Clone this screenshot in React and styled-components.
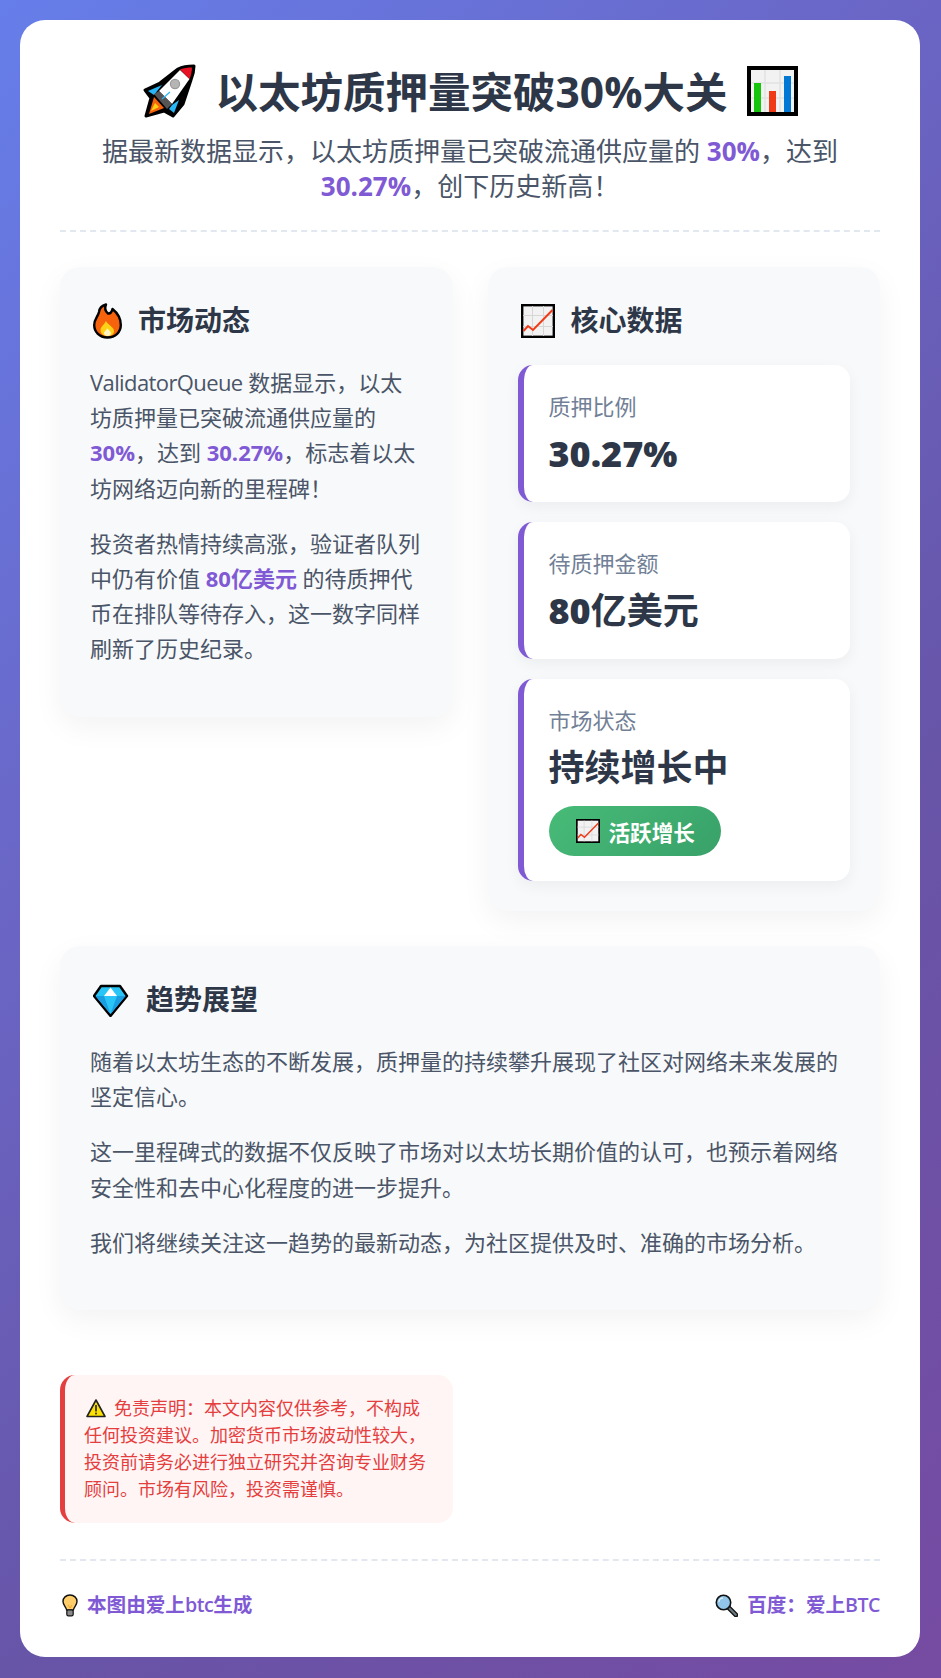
import React from "react";
import styled, { createGlobalStyle } from "styled-components";

const GlobalStyle = createGlobalStyle`
  * { box-sizing: border-box; }
  body {
    margin: 0;
    font-family: "Open Sans", "Noto Sans CJK SC", sans-serif;
  }
`;

const RocketIcon = () => (
  <Glyph $w={54} $h={54} viewBox="0 0 54 54">
    <path d="M52 2 C46 2 40 3 36 5 L18 19 L3 26 L9 34 L4 52 L22 47 L31 52 L41 40 L49 16 C51 11 52 6 52 2 Z" fill="#000" stroke="#000" strokeWidth="3" strokeLinejoin="round" />
    <polygon points="12,33 22,44 7,50" fill="#f7630c" />
    <polygon points="13,39 17,43 9,47" fill="#fcd116" />
    <polygon points="6,27 20,21 12,31" fill="#29b6f6" />
    <polygon points="30,41 37,36 32,49 27,45" fill="#29b6f6" />
    <polygon points="17,27 38,6 47.5,15 30,40" fill="#fff" />
    <path d="M38 5.5 C42 4 46 3.5 50 3.5 C50 7 49 11.5 47.5 15 Z" fill="#e81224" />
    <polygon points="12,30 17,27 30,40 25,45" fill="#555" />
    <path d="M20 35 L28 28" stroke="#29b6f6" strokeWidth="1.2" />
    <circle cx="33" cy="20" r="4.6" fill="#b5b5b5" stroke="#9a9a9a" strokeWidth="1.2" />
  </Glyph>
);

const BarsIcon = () => (
  <Glyph $w={51} $h={50} viewBox="0 0 51 50">
    <rect x="2" y="2" width="47" height="46" fill="#f2f2f2" stroke="#000" strokeWidth="4" />
    <path d="M18 4 V46 M33 4 V46 M4 17 H47 M4 32 H47" stroke="#e2e2e2" strokeWidth="1.5" />
    <rect x="7" y="17" width="7" height="29" fill="#16c60c" />
    <rect x="22" y="25" width="7" height="21" fill="#f03a17" />
    <rect x="37" y="10" width="7" height="36" fill="#0078d4" />
  </Glyph>
);

const TrendIcon = ({ size = 34 }) => (
  <Glyph $w={size} $h={size} viewBox="0 0 34 34">
    <rect x="1.2" y="1.2" width="31.6" height="31.6" fill="#f2f2f2" stroke="#000" strokeWidth="2.4" />
    <path d="M11.5 2 V32 M22.5 2 V32 M2 11.5 H32 M2 22.5 H32" stroke="#d6d6d6" strokeWidth="1" />
    <path d="M2.5 27 L7 22 L12 26 L31.5 6" fill="none" stroke="#f03a17" strokeWidth="2" />
  </Glyph>
);

const FireIcon = () => (
  <Glyph $w={29} $h={36} viewBox="0 0 29 36">
    <path d="M14.5 34.5 C6 34.5 1.2 28.5 1.2 22 C1.2 16 5 13.5 6 9 C6.5 5 9 2.5 13 1.5 C11.5 5 12.5 8.5 15 10.5 C17.5 11 19 8.5 19.5 6 C24.5 10 27.8 15 27.8 22 C27.8 29 22.5 34.5 14.5 34.5 Z" fill="#f7630c" stroke="#000" strokeWidth="2.4" strokeLinejoin="round" />
    <path d="M14.5 33 C10 33 7.5 30 7.5 27 C7.5 24 10.5 22.5 13 18 C15 22 21 24 21 28 C21 31 18.5 33 14.5 33 Z" fill="#fcd116" />
    <path d="M14.5 33 C12 33 11 31.5 11 30 C11 28.5 13 27.5 14.5 25.5 C16 27.5 18 28.5 18 30 C18 31.5 17 33 14.5 33 Z" fill="#fff3c4" />
  </Glyph>
);

const DiamondIcon = () => (
  <Glyph $w={37} $h={33} viewBox="0 0 37 33">
    <polygon points="8,2 27,2 34,12 17.5,32 1,12" fill="#29c5f6" stroke="#000" strokeWidth="2.4" strokeLinejoin="round" />
    <polygon points="2.5,12 11,12 17.5,30" fill="#1b9de2" />
    <polygon points="32.5,12 24,12 17.5,30" fill="#1b9de2" />
    <polygon points="17.5,3.5 24,12 11,12" fill="#fff" />
  </Glyph>
);

const WarningIcon = () => (
  <InlineGlyph $w={20} $h={20} viewBox="0 0 20 20">
    <polygon points="10,2 19,18.5 1,18.5" fill="#fce100" stroke="#222" strokeWidth="1.6" strokeLinejoin="round" />
    <rect x="9.2" y="7" width="1.6" height="6.5" fill="#222" />
    <rect x="9.2" y="14.6" width="1.6" height="1.8" fill="#222" />
  </InlineGlyph>
);

const BulbIcon = () => (
  <Glyph $w={16} $h={23} viewBox="0 0 16 23">
    <path d="M8 1 C4 1 1 3.8 1 7.5 C1 11 4 12.5 4.6 16 H11.4 C12 12.5 15 11 15 7.5 C15 3.8 12 1 8 1 Z" fill="#ffce6b" stroke="#111" strokeWidth="1.4" />
    <path d="M6 11 L8 14 L10 11" fill="none" stroke="#f5a623" strokeWidth="1" />
    <rect x="4.8" y="16" width="6.4" height="5.8" rx="1.6" fill="#8a8a8a" stroke="#111" strokeWidth="1.2" />
  </Glyph>
);

const SearchIcon = () => (
  <Glyph $w={23} $h={23} viewBox="0 0 23 23">
    <path d="M13.5 13.5 L21 21" stroke="#111" strokeWidth="4.6" strokeLinecap="round" />
    <path d="M14 14 L20.8 20.8" stroke="#6b7a80" strokeWidth="2.2" strokeLinecap="round" />
    <circle cx="8.5" cy="8.5" r="7.2" fill="#91c6ea" stroke="#111" strokeWidth="1.6" />
    <path d="M4 8 C4 5.5 6 4 8 4" fill="none" stroke="#d8eefa" strokeWidth="1.4" />
  </Glyph>
);

const App = () => (
  <>
    <GlobalStyle />
    <Page>
      <Card>
        <Header>
          <Title>
            <RocketIcon />
            <TitleText>以太坊质押量突破30%大关</TitleText>
            <BarsIcon />
          </Title>
          <Subtitle>
            据最新数据显示，以太坊质押量已突破流通供应量的 <Hl>30%</Hl>，达到 <Hl>30.27%</Hl>，创下历史新高！
          </Subtitle>
        </Header>

        <Grid>
          <Panel>
            <PanelTitle>
              <FireIcon />
              <PanelTitleText>市场动态</PanelTitleText>
            </PanelTitle>
            <Para>
              <Word>ValidatorQueue</Word> 数据显示，以太坊质押量已突破流通供应量的 <Hl>30%</Hl>，达到 <Hl>30.27%</Hl>，标志着以太坊网络迈向新的里程碑！
            </Para>
            <Para>
              投资者热情持续高涨，验证者队列中仍有价值 <Hl>80亿美元</Hl> 的待质押代币在排队等待存入，这一数字同样刷新了历史纪录。
            </Para>
          </Panel>

          <Panel>
            <PanelTitle>
              <TrendIcon />
              <PanelTitleText>核心数据</PanelTitleText>
            </PanelTitle>
            <StatList>
              <StatCard>
                <StatLabel>质押比例</StatLabel>
                <StatValue><Digits>30.27%</Digits></StatValue>
              </StatCard>
              <StatCard>
                <StatLabel>待质押金额</StatLabel>
                <StatValue><Digits>80</Digits>亿美元</StatValue>
              </StatCard>
              <StatCard>
                <StatLabel>市场状态</StatLabel>
                <StatValue>持续增长中</StatValue>
                <Badge>
                  <TrendIcon size={24} />
                  活跃增长
                </Badge>
              </StatCard>
            </StatList>
          </Panel>

          <Panel $wide>
            <PanelTitle>
              <DiamondIcon />
              <PanelTitleText>趋势展望</PanelTitleText>
            </PanelTitle>
            <Para>随着以太坊生态的不断发展，质押量的持续攀升展现了社区对网络未来发展的坚定信心。</Para>
            <Para>这一里程碑式的数据不仅反映了市场对以太坊长期价值的认可，也预示着网络安全性和去中心化程度的进一步提升。</Para>
            <Para>我们将继续关注这一趋势的最新动态，为社区提供及时、准确的市场分析。</Para>
          </Panel>

          <Disclaimer>
            <WarningIcon />
            免责声明：本文内容仅供参考，不构成任何投资建议。加密货币市场波动性较大，投资前请务必进行独立研究并咨询专业财务顾问。市场有风险，投资需谨慎。
          </Disclaimer>
        </Grid>

        <Footer>
          <FootNote>
            <BulbIcon />
            <FootText>本图由爱上<FootLatin>btc</FootLatin>生成</FootText>
          </FootNote>
          <FootNote>
            <SearchIcon />
            <FootText>百度：爱上<FootLatin>BTC</FootLatin></FootText>
          </FootNote>
        </Footer>
      </Card>
    </Page>
  </>
);

export default App;

const Page = styled.div`
  min-height: 100vh;
  padding: 20px;
  background: linear-gradient(135deg, #667eea 0%, #6a65c4 36%, #6755a8 64%, #764ba2 100%);
`;

const Card = styled.div`
  width: 900px;
  background: #fff;
  border-radius: 25px;
  padding: 40px;
`;

const Header = styled.header`
  text-align: center;
  padding-bottom: 26px;
  border-bottom: 2px dashed #e2e8f0;
  margin-bottom: 35px;
`;

const Title = styled.h1`
  display: flex;
  justify-content: center;
  align-items: center;
  gap: 20px;
  margin: 0 0 12px;
  height: 62px;
  font-size: 42.5px;
  font-weight: 700;
  color: #2d3748;
`;

const TitleText = styled.span`
  margin-bottom: 4px;
`;

const Subtitle = styled.p`
  margin: 0;
  font-size: 26px;
  line-height: 35px;
  color: #4a5568;
`;

const Hl = styled.strong`
  color: #805ad5;
  font-weight: 700;
`;

const Word = styled.span`
  letter-spacing: -0.6px;
`;

const Glyph = styled.svg`
  flex: none;
  display: block;
  width: ${(p) => p.$w}px;
  height: ${(p) => p.$h}px;
`;

const InlineGlyph = styled(Glyph)`
  display: inline-block;
  vertical-align: -3px;
  margin: 0 8px 0 2px;
`;

const Grid = styled.div`
  display: grid;
  grid-template-columns: 1fr 1fr;
  gap: 35px;
  align-items: start;
`;

const Panel = styled.section`
  grid-column: ${(p) => (p.$wide ? "1 / -1" : "auto")};
  background: #f8f9fa;
  border-radius: 20px;
  padding: 30px;
  box-shadow: 0 10px 30px rgba(0, 0, 0, 0.05);
`;

const PanelTitle = styled.h2`
  display: flex;
  align-items: center;
  gap: 16px;
  height: 48px;
  margin: 0 0 20px;
  padding-left: 3px;
  font-size: 28px;
  font-weight: 700;
  color: #2d3748;
`;

const PanelTitleText = styled.span`
  margin-bottom: 5px;
`;

const Para = styled.p`
  margin: 0 0 20px;
  font-size: 22px;
  line-height: 35.2px;
  color: #4a5568;
`;

const StatList = styled.div`
  display: flex;
  flex-direction: column;
  gap: 20px;
`;

const StatCard = styled.div`
  background: #fff;
  border-left: 6px solid #805ad5;
  border-radius: 15px;
  padding: 24px 25px 26px;
  box-shadow: 0 5px 15px rgba(0, 0, 0, 0.05);
`;

const StatLabel = styled.div`
  font-size: 22px;
  line-height: 34px;
  margin-bottom: 8px;
  color: #718096;
`;

const StatValue = styled.div`
  font-size: 36px;
  line-height: 45px;
  font-weight: 700;
  color: #2d3748;
`;

const Digits = styled.span`
  font-weight: 800;
`;

const Badge = styled.div`
  display: inline-flex;
  align-items: center;
  gap: 9px;
  height: 50px;
  margin: 16px 0 -1px;
  padding: 0 26px 0 27px;
  border-radius: 25px;
  background: linear-gradient(135deg, #48bb78, #38a169);
  color: #fff;
  font-size: 21.6px;
  font-weight: 700;
`;

const Disclaimer = styled.div`
  margin-top: 30px;
  padding: 20px 19px;
  background: #fff5f5;
  border-left: 5px solid #e53e3e;
  border-radius: 15px;
  color: #e53e3e;
  font-size: 18px;
  line-height: 27px;
`;

const Footer = styled.footer`
  display: flex;
  justify-content: space-between;
  margin-top: 36px;
  padding-top: 32px;
  border-top: 2px dashed #e2e8f0;
`;

const FootNote = styled.div`
  display: flex;
  align-items: center;
  gap: 9px;
  padding-left: 2px;
  height: 24px;
  font-size: 19.6px;
  font-weight: 700;
  color: #805ad5;
`;

const FootText = styled.span`
  margin-bottom: 3px;
`;

const FootLatin = styled.span`
  font-weight: 600;
  letter-spacing: -0.5px;
`;
